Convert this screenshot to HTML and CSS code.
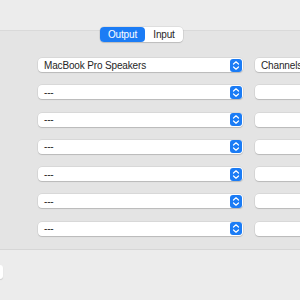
FILE: index.html
```html
<!DOCTYPE html>
<html lang="en">
<head>
    <meta charset="UTF-8">
    <title>Sound</title>
    <link rel="stylesheet" href="styles.css">
</head>
<body>

<div class="top"></div>

<div class="tabs">
    <span class="tab active">Output</span>
    <span class="tab">Input</span>
</div>

<div class="box">
    <div class="row">
        <div class="popup"><span>MacBook Pro Speakers</span><i class="stepper"><svg viewBox="0 0 12 13"><path d="M3.5 5 L6 2.8 L8.5 5 M3.5 8 L6 10.2 L8.5 8"/></svg></i></div>
        <div class="field">Channels</div>
    </div>
    <div class="row">
        <div class="popup"><span>---</span><i class="stepper"><svg viewBox="0 0 12 13"><path d="M3.5 5 L6 2.8 L8.5 5 M3.5 8 L6 10.2 L8.5 8"/></svg></i></div>
        <div class="field"></div>
    </div>
    <div class="row">
        <div class="popup"><span>---</span><i class="stepper"><svg viewBox="0 0 12 13"><path d="M3.5 5 L6 2.8 L8.5 5 M3.5 8 L6 10.2 L8.5 8"/></svg></i></div>
        <div class="field"></div>
    </div>
    <div class="row">
        <div class="popup"><span>---</span><i class="stepper"><svg viewBox="0 0 12 13"><path d="M3.5 5 L6 2.8 L8.5 5 M3.5 8 L6 10.2 L8.5 8"/></svg></i></div>
        <div class="field"></div>
    </div>
    <div class="row">
        <div class="popup"><span>---</span><i class="stepper"><svg viewBox="0 0 12 13"><path d="M3.5 5 L6 2.8 L8.5 5 M3.5 8 L6 10.2 L8.5 8"/></svg></i></div>
        <div class="field"></div>
    </div>
    <div class="row">
        <div class="popup"><span>---</span><i class="stepper"><svg viewBox="0 0 12 13"><path d="M3.5 5 L6 2.8 L8.5 5 M3.5 8 L6 10.2 L8.5 8"/></svg></i></div>
        <div class="field"></div>
    </div>
    <div class="row">
        <div class="popup"><span>---</span><i class="stepper"><svg viewBox="0 0 12 13"><path d="M3.5 5 L6 2.8 L8.5 5 M3.5 8 L6 10.2 L8.5 8"/></svg></i></div>
        <div class="field"></div>
    </div>
</div>

<div class="bottom">
    <div class="button"></div>
</div>

</body>
</html>
```

FILE: styles.css
```css
body {
    font-family: "Liberation Sans", Arial, sans-serif;
    font-size: 10px;
    letter-spacing: -0.15px;
    color: #262626;
    background-color: #ececec;
    margin: 0;
    width: 300px;
    height: 300px;
    overflow: hidden;
}
.top {
    height: 27px;
}
.tabs {
    position: relative;
    z-index: 1;
    display: flex;
    width: 83px;
    height: 15px;
    margin-left: 100px;
    margin-bottom: -12px;
    background-color: white;
    border-radius: 4px;
    box-shadow: 0 0 0 0.5px rgba(0, 0, 0, 0.12), 0 1px 1px rgba(0, 0, 0, 0.12);
}
.tab {
    display: flex;
    align-items: center;
    justify-content: center;
    width: 38px;
}
.tab.active {
    width: 45px;
    background-color: #1b7cf5;
    color: white;
    border-radius: 4px;
}
.box {
    background-color: #e4e4e4;
    border-top: 1px solid #d9d9d9;
    border-bottom: 1px solid #d6d6d6;
    padding: 27px 0 13px 38px;
    display: grid;
    grid-template-rows: repeat(7, 14px);
    row-gap: 13.3px;
}
.row {
    display: flex;
    gap: 12px;
}
.popup,
.field {
    display: flex;
    align-items: center;
    height: 14px;
    background-color: white;
    border-radius: 4px;
    box-shadow: 0 0 0 0.5px rgba(0, 0, 0, 0.1), 0 1px 1px rgba(0, 0, 0, 0.14);
}
.popup {
    flex: none;
    width: 205px;
    justify-content: space-between;
    padding-left: 6px;
    box-sizing: border-box;
}
.field {
    flex: none;
    width: 60px;
    padding-left: 6px;
    white-space: nowrap;
}
.stepper {
    width: 12px;
    height: 13px;
    margin-right: 1px;
    background-color: #1b7cf5;
    border-radius: 3px;
}
.stepper svg {
    display: block;
    width: 12px;
    height: 13px;
}
.stepper path {
    fill: none;
    stroke: white;
    stroke-width: 1.2;
    stroke-linecap: round;
    stroke-linejoin: round;
}
.bottom {
    padding-top: 15px;
}
.button {
    width: 3px;
    height: 14px;
    background-color: white;
    border-radius: 0 4px 4px 0;
    box-shadow: 0 1px 1px rgba(0, 0, 0, 0.14);
}
```
